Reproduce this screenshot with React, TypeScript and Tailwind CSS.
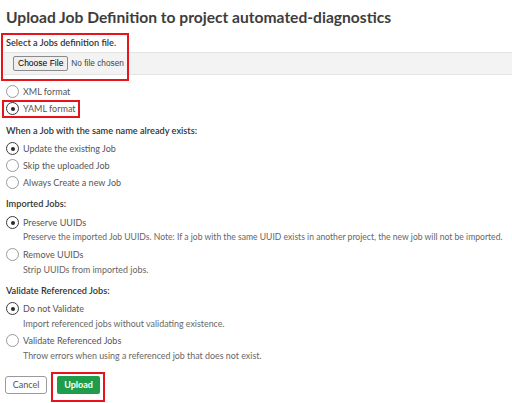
import React from "react";

function Radio({ checked, label }: { checked?: boolean; label: string }) {
  return (
    <div className="flex items-center h-[17px] pl-[6px]">
      <span
        className={
          "flex items-center justify-center w-[13px] h-[13px] rounded-full border bg-white " +
          (checked ? "border-[#3a3a3a] border-[1.5px]" : "border-[#9a9a9a]")
        }
      >
        {checked && <span className="w-[4px] h-[4px] rounded-full bg-[#2a2a2a]" />}
      </span>
      <span className="ml-[4px] text-[9px] text-[#555] whitespace-nowrap">{label}</span>
    </div>
  );
}

function Desc({ text, small }: { text: string; small?: boolean }) {
  return (
    <div
      className={
        "h-[13px] flex items-center pl-[23px] text-[#666] whitespace-nowrap " +
        (small ? "text-[8.6px]" : "text-[8.9px]")
      }
    >
      {text}
    </div>
  );
}

function Label({ text }: { text: string }) {
  return (
    <div className="h-[17px] flex items-center pl-[6px] text-[9.2px] text-[#333] font-semibold whitespace-nowrap">
      {text}
    </div>
  );
}

export default function App() {
  return (
    <div
      className="relative w-[512px] h-[403px] bg-white overflow-hidden flex flex-col"
      style={{ fontFamily: "Lato, 'Open Sans', sans-serif" }}
    >
      <div className="h-[33px] pl-[6px] pt-[7px] text-[15.6px] leading-[20px] font-bold text-[#3d3d3d] whitespace-nowrap">
        Upload Job Definition to project automated-diagnostics
      </div>
      <div className="h-[19px] flex items-center pl-[6px] text-[9.2px] text-[#333] font-semibold">
        Select a Jobs definition file.
      </div>
      <div className="ml-[4px] h-[23px] bg-[#f3f3f3] border-y border-[#e4e4e4] flex items-center pl-[9px]">
        <span
          className="h-[15px] px-[4px] flex items-center bg-[#efefef] border border-[#8a8a8a] rounded-[2px] text-[8.5px] text-black"
          style={{ fontFamily: "'Liberation Sans', Arial, sans-serif" }}
        >
          Choose File
        </span>
        <span
          className="ml-[3px] text-[8.3px] text-[#444]"
          style={{ fontFamily: "'Liberation Sans', Arial, sans-serif" }}
        >
          No file chosen
        </span>
      </div>
      <div className="mt-[8px]">
        <Radio label="XML format" />
        <Radio checked label="YAML format" />
      </div>
      <div className="mt-[5px]">
        <Label text="When a Job with the same name already exists:" />
      </div>
      <div className="mt-[1px]">
        <Radio checked label="Update the existing Job" />
        <Radio label="Skip the uploaded Job" />
        <Radio label="Always Create a new Job" />
      </div>
      <div className="mt-[4px]">
        <Label text="Imported Jobs:" />
      </div>
      <div className="mt-[2px]">
        <Radio checked label="Preserve UUIDs" />
        <Desc
          small
          text="Preserve the imported Job UUIDs. Note: If a job with the same UUID exists in another project, the new job will not be imported."
        />
      </div>
      <div className="mt-[2px]">
        <Radio label="Remove UUIDs" />
        <Desc text="Strip UUIDs from imported jobs." />
      </div>
      <div className="mt-[6px]">
        <Label text="Validate Referenced Jobs:" />
      </div>
      <div className="mt-[1px]">
        <Radio checked label="Do not Validate" />
        <Desc text="Import referenced jobs without validating existence." />
      </div>
      <div className="mt-[2px]">
        <Radio label="Validate Referenced Jobs" />
        <Desc text="Throw errors when using a referenced job that does not exist." />
      </div>
      <div className="mt-[14px] flex items-center pl-[5px] gap-[10px]">
        <button className="h-[18px] w-[42px] border border-[#9a9a9a] rounded-[3px] text-[9px] text-[#555] bg-white flex items-center justify-center">
          Cancel
        </button>
        <button className="h-[18px] w-[43px] rounded-[2px] bg-[#1f9d4a] text-white text-[9px] font-bold flex items-center justify-center">
          Upload
        </button>
      </div>

      <div className="absolute left-[1px] top-[33px] w-[128px] h-[48px] border-2 border-[#e8141b]" />
      <div className="absolute left-[2px] top-[100px] w-[78px] h-[18px] border-2 border-[#e8141b]" />
      <div className="absolute left-[51px] top-[372px] w-[54px] h-[30px] border-2 border-[#e8141b]" />
    </div>
  );
}
